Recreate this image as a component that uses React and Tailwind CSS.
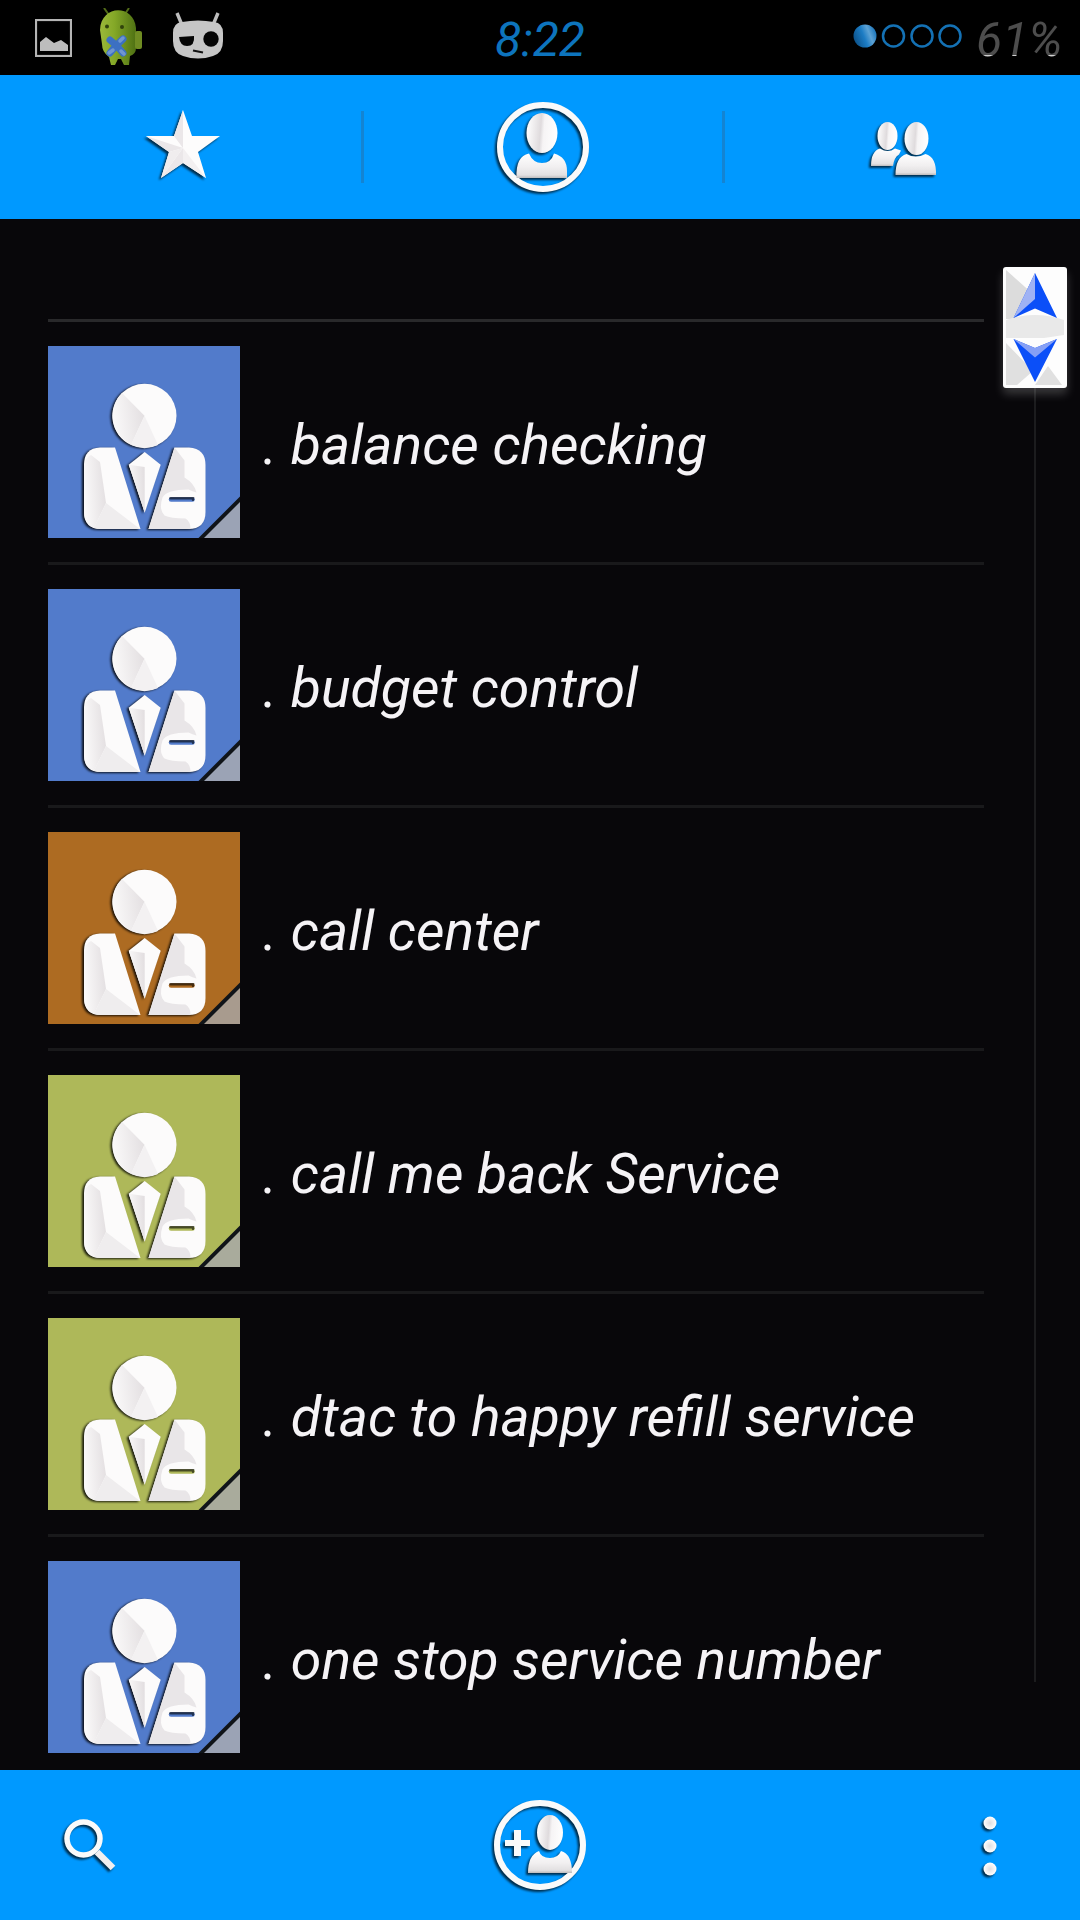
import React from 'react';

const contacts = [
    { name: '. balance checking', color: 'text-[#527bcb]', corner: '#9ba3b5' },
    { name: '. budget control', color: 'text-[#527bcb]', corner: '#9ba3b5' },
    { name: '. call center', color: 'text-[#ad6b22]', corner: '#a89b8e' },
    { name: '. call me back Service', color: 'text-[#aeb859]', corner: '#a9ab9c' },
    { name: '. dtac to happy refill service', color: 'text-[#aeb859]', corner: '#a9ab9c' },
    { name: '. one stop service number', color: 'text-[#527bcb]', corner: '#9ba3b5' },
];

// Shared gradients, referenced by id from every icon
const Gradients = () => (
    <svg className="absolute w-0 h-0" aria-hidden="true">
        <defs>
            <linearGradient id="shine" x1="0" y1="0.4" x2="1" y2="0.5">
                <stop offset="0" stopColor="#ffffff" />
                <stop offset="0.45" stopColor="#dfdbdd" />
                <stop offset="0.56" stopColor="#f6f4f5" />
                <stop offset="1" stopColor="#ffffff" />
            </linearGradient>
            <linearGradient id="bust" x1="0" y1="0" x2="0" y2="1">
                <stop offset="0" stopColor="#ffffff" />
                <stop offset="0.55" stopColor="#f1eff0" />
                <stop offset="0.88" stopColor="#e2e0e1" />
                <stop offset="1" stopColor="#bdbbbc" />
            </linearGradient>
            <radialGradient id="dot" cx="0.5" cy="0.5" r="0.5">
                <stop offset="0" stopColor="#e0dee0" />
                <stop offset="1" stopColor="#ffffff" />
            </radialGradient>
            <linearGradient id="facet" x1="0" y1="0.6" x2="1" y2="0.4">
                <stop offset="0" stopColor="#fbfafa" />
                <stop offset="1" stopColor="#e3dfe1" />
            </linearGradient>
            <linearGradient id="signal" x1="0" y1="0.7" x2="1" y2="0.3">
                <stop offset="0" stopColor="#0b4f86" />
                <stop offset="0.45" stopColor="#1c7cc4" />
                <stop offset="0.7" stopColor="#5da2d4" />
                <stop offset="1" stopColor="#1471b8" />
            </linearGradient>
            <linearGradient id="droid" x1="0" y1="0" x2="1" y2="0">
                <stop offset="0" stopColor="#9bb83a" />
                <stop offset="0.4" stopColor="#84a827" />
                <stop offset="1" stopColor="#4e7013" />
            </linearGradient>
        </defs>
    </svg>
);

const shadow = 'overflow-visible drop-shadow-[-2px_2px_1px_rgba(0,0,0,0.7)]';

const StatusBar = () => (
    <div className="h-[75px] bg-black flex items-center justify-between relative pl-[35px] pr-[19px]">
        <div className="flex items-center">
            <svg className="w-[37px] h-[38px]" viewBox="0 0 37 38">
                <rect x="1" y="1" width="35" height="36" fill="none" stroke="#b5b5b5" strokeWidth="2.2" />
                <path d="M5 32V23l6-5 8 6 7-3 7 5v6z" fill="#bdbdbd" />
            </svg>
            <svg className="w-[44px] h-[58px] ml-[27px] -mt-px" viewBox="0 0 44 58">
                <path d="M5 0l5 7M30 0l-4 6" stroke="#526b18" strokeWidth="2" />
                <path d="M1 22C2-4 35-4 37 20v20q0 6-6 8l-1 9h-5l-3-6h-3l-3 6h-4l-2-8Q3 44 3 36z" fill="url(#droid)" />
                <rect x="36" y="23" width="7" height="18" rx="2" fill="#6f8c22" />
                <circle cx="8" cy="18.500" r="2" fill="#31430d" />
                <circle cx="23" cy="19" r="2" fill="#31430d" />
                <path d="M11 32q7 5 13 13M24 31q-7 6-13 14" fill="none" stroke="#3c70c2" strokeWidth="7" strokeLinecap="round" />
                <path d="M10 45l4-3M24 30l-3 3M22 43l3 3" stroke="#7096d0" strokeWidth="3.500" strokeLinecap="round" />
            </svg>
            <svg className="w-[52px] h-[48px] ml-[29px] -mt-[3px]" viewBox="0 0 52 48">
                <path d="M5 1l5 12M46 1l-5 12" stroke="#bdbdbd" strokeWidth="3.4" />
                <path d="M10 10Q26 7 42 10q9 1 9 11v8q0 12-10 15-15 5-30 0Q1 41 1 29v-8q0-10 9-11z" fill="#c6c6c6" />
                <path d="M7 25l15-1q1 10-7 10-7 0-8-9z" fill="#050505" />
                <circle cx="39" cy="27" r="7.7" fill="#050505" />
                <path d="M21 38.500l10 2" stroke="#111" strokeWidth="2.2" />
            </svg>
        </div>
        <div className="absolute left-[495px] top-[12px] h-14 leading-[56px] text-[48px] italic text-[#0d74bd]">8:22</div>
        <div className="flex items-center">
            <svg className="w-[112px] h-[28px] mr-[13px] -mt-[3px]" viewBox="0 0 112 28">
                <circle cx="14" cy="14" r="11.500" fill="url(#signal)" />
                <circle cx="42.500" cy="14" r="10.500" fill="none" stroke="#1471b4" strokeWidth="2.500" />
                <circle cx="71" cy="14" r="10.500" fill="none" stroke="#1471b4" strokeWidth="2.500" />
                <circle cx="99" cy="14" r="10.500" fill="none" stroke="#1471b4" strokeWidth="2.500" />
            </svg>
            <div className="w-[85px] mt-[5px]">
                <span className="block w-[92px] text-[48px] leading-[56px] italic bg-linear-to-b from-[#4d4d4d] from-77% to-[#d0d0d0] to-77% bg-clip-text text-transparent">61%</span>
            </div>
        </div>
    </div>
);

const StarIcon = () => (
    <svg className={`w-[76px] h-[72px] ${shadow}`} viewBox="0 0 76 72">
        <path d="M38 1l9 26h28L53 43l8 26-23-15-22 15 8-26L1 27h28z" fill="#fdfcfc" />
        <path d="M38 1v38L29 27zM1 27l37 12-14 4zM38 39v15L16 69z" fill="#ebe7e9" />
        <path d="M24 43l14-4-22 30z" fill="#f0edee" />
        <path d="M38 39l23 30-23-15z" fill="#f3f0f1" />
    </svg>
);

const PersonIcon = () => (
    <svg className={`w-[94px] h-[92px] ${shadow}`} viewBox="0 0 94 92">
        <ellipse cx="47" cy="46" rx="43" ry="42" fill="none" stroke="#fafafa" strokeWidth="6" />
        <ellipse cx="46" cy="32" rx="15.500" ry="20" fill="url(#shine)" />
        <path d="M20.500 77q-1-22 12.500-24.500Q37 62 46 62t12-9.500Q71 56 71 70v7z" fill="url(#bust)" />
    </svg>
);

const GroupIcon = () => (
    <svg className={`w-[67px] h-[54px] ${shadow}`} viewBox="0 0 67 54">
        <ellipse cx="17.500" cy="14" rx="10" ry="14" fill="url(#shine)" />
        <path d="M1 44q0-15 9-17.500 8 5 15 0l6 2-2 4q-5 3-6 11.500z" fill="url(#bust)" />
        <ellipse cx="46.500" cy="16.500" rx="12" ry="16.500" fill="url(#shine)" />
        <path d="M25.500 53q0-18 11-21 9 5 19 0 11 3 10.500 21z" fill="url(#bust)" />
    </svg>
);

const Tabs = () => (
    <div className="h-[144px] bg-[#0099ff] flex">
        <div className="w-[361px] flex pl-[145px] pt-[34px]"><StarIcon /></div>
        <div className="w-[3px] h-[72px] mt-[36px] bg-[#1484d2]" />
        <div className="w-[358px] flex pl-[132px] pt-[26px]"><PersonIcon /></div>
        <div className="w-[3px] h-[72px] mt-[36px] bg-[#1484d2]" />
        <div className="flex-1 flex pl-[145px] pt-[47px]"><GroupIcon /></div>
    </div>
);

const Avatar = ({ color, corner }) => (
    <svg className={`w-[192px] h-[192px] shrink-0 ${color}`} viewBox="0 0 192 192">
        <rect width="192" height="192" fill="currentColor" />
        <g className="drop-shadow-[-1.5px_1.5px_1px_rgba(0,0,0,0.85)]">
            <circle cx="96.500" cy="69.700" r="32" fill="#fcfbfb" />
            <path d="M52 101.500h15l25.500 81.500H53q-17 0-17-17v-47q0-17 16-17.500z" fill="#fcfbfb" />
            <path d="M96.700 106l16 12.700-16 48-16-48z" fill="#fcfbfb" />
            <path d="M126.500 101.500H141q16.500 1 16.500 17.500v47q0 17-17 17h-40z" fill="#fcfbfb" />
        </g>
        <path d="M96.500 69.700L74 47a32 32 0 0 0 9 52z" fill="url(#facet)" />
        <path d="M96.500 69.700L83 99a32 32 0 0 0 27 0z" fill="#f3f1f2" />
        <path d="M36 119q2-8 7-10l9 7 6 41-12 25q-10-4-10-16z" fill="url(#facet)" />
        <path d="M58 157l-12 25q3 1 7 1h39z" fill="#efedee" />
        <path d="M96.700 121v45.700l-16-48z" fill="url(#facet)" />
        <path d="M126.500 101.500l10 13v17q10 6 12 15-4-1-8-3-22 0-26 8-4 12 2 18 6 3 21 3 5 3 5 10.500h-42z" fill="#e9e6e8" />
        <path d="M123 153.500h21.500" stroke="currentColor" strokeWidth="4.500" strokeLinecap="round" />
        <path d="M122.500 152.300h22.500v1.500" fill="none" stroke="#000000" strokeOpacity="0.6" strokeWidth="2.500" strokeLinecap="round" />
        <path d="M192 150.500V192h-41.500z" fill="#101419" />
        <path d="M192 156v36h-36z" fill={corner} />
    </svg>
);

const FastScroller = () => (
    <div className="w-[96px] pt-[48px] pl-[19px] flex flex-col">
        <svg className="w-[64px] h-[121px] overflow-visible drop-shadow-[0_6px_5px_rgba(255,255,255,0.2)]" viewBox="0 0 64 121">
            <rect width="64" height="121" rx="3" fill="#fdfdfd" />
            <path d="M3 3l28 25-20 24H3z" fill="#dcdcdc" />
            <path d="M3 53q29-10 58 0v15l-20 3H3z" fill="#e9e9e9" />
            <path d="M3 76l27 28-16 14H3zM45 99l14 19H32z" fill="#e0e0e0" />
            <path d="M32 6L54 51l-22-9.500L10.500 51z" fill="#0b4ff8" />
            <path d="M32 6L10.500 51 32 32z" fill="#9fb2f4" />
            <path d="M10.500 72L32 81l22-9-22 43z" fill="#0b4ff8" />
            <path d="M10.500 72L32 81l22-9-22 18.500z" fill="#86a0f5" />
        </svg>
        <div className="w-[2px] h-[1294px] ml-[31px] bg-[#1c1c1e]" />
    </div>
);

const ContactList = () => (
    <div className="h-[1551px] bg-[#08070a] flex overflow-hidden">
        <div className="w-[936px] ml-[48px] pt-[100px] shrink-0">
            {contacts.map((c, i) => (
                <div key={i} className={`h-[243px] border-t-[3px] pt-6 flex ${i === 0 ? 'border-[#29292b]' : 'border-[#19191b]'}`}>
                    <Avatar color={c.color} corner={c.corner} />
                    <span className="ml-[23px] h-[192px] leading-[200px] text-[55.4px] italic text-[#f5f3f6] whitespace-nowrap">{c.name}</span>
                </div>
            ))}
        </div>
        <FastScroller />
    </div>
);

const BottomBar = () => (
    <div className="h-[150px] bg-[#0099ff] flex items-start pl-[63px] pr-[83px]">
        <svg className={`w-[54px] h-[54px] mt-[48px] ${shadow}`} viewBox="0 0 54 54">
            <circle cx="20.500" cy="20.500" r="16.500" fill="none" stroke="#fafafa" strokeWidth="5.500" />
            <path d="M34 34l16 16" stroke="#f1eff0" strokeWidth="6.500" />
        </svg>
        <svg className={`w-[94px] h-[92px] mt-[29px] ml-[376px] ${shadow}`} viewBox="0 0 94 92">
            <ellipse cx="47" cy="46" rx="43" ry="42" fill="none" stroke="#fafafa" strokeWidth="6" />
            <path d="M21 31h7v10h9v6h-9v10h-7V47H12v-6h9z" fill="#fafafa" />
            <ellipse cx="57" cy="33.500" rx="13" ry="17.500" fill="url(#shine)" />
            <path d="M35 74q0-18 11-22 2 7 11 7 8 0 11-7 11 3 11 22z" fill="url(#bust)" />
        </svg>
        <svg className={`w-[14px] h-[60px] mt-[46px] ml-auto ${shadow}`} viewBox="0 0 14 60">
            <circle cx="7" cy="7" r="6.500" fill="url(#dot)" />
            <circle cx="7" cy="30" r="6.500" fill="url(#dot)" />
            <circle cx="7" cy="53" r="6.500" fill="url(#dot)" />
        </svg>
    </div>
);

const App = () => (
    <div className="w-[1080px] h-[1920px] overflow-hidden bg-black font-['Roboto',sans-serif]">
        <Gradients />
        <StatusBar />
        <Tabs />
        <ContactList />
        <BottomBar />
    </div>
);

export default App;
